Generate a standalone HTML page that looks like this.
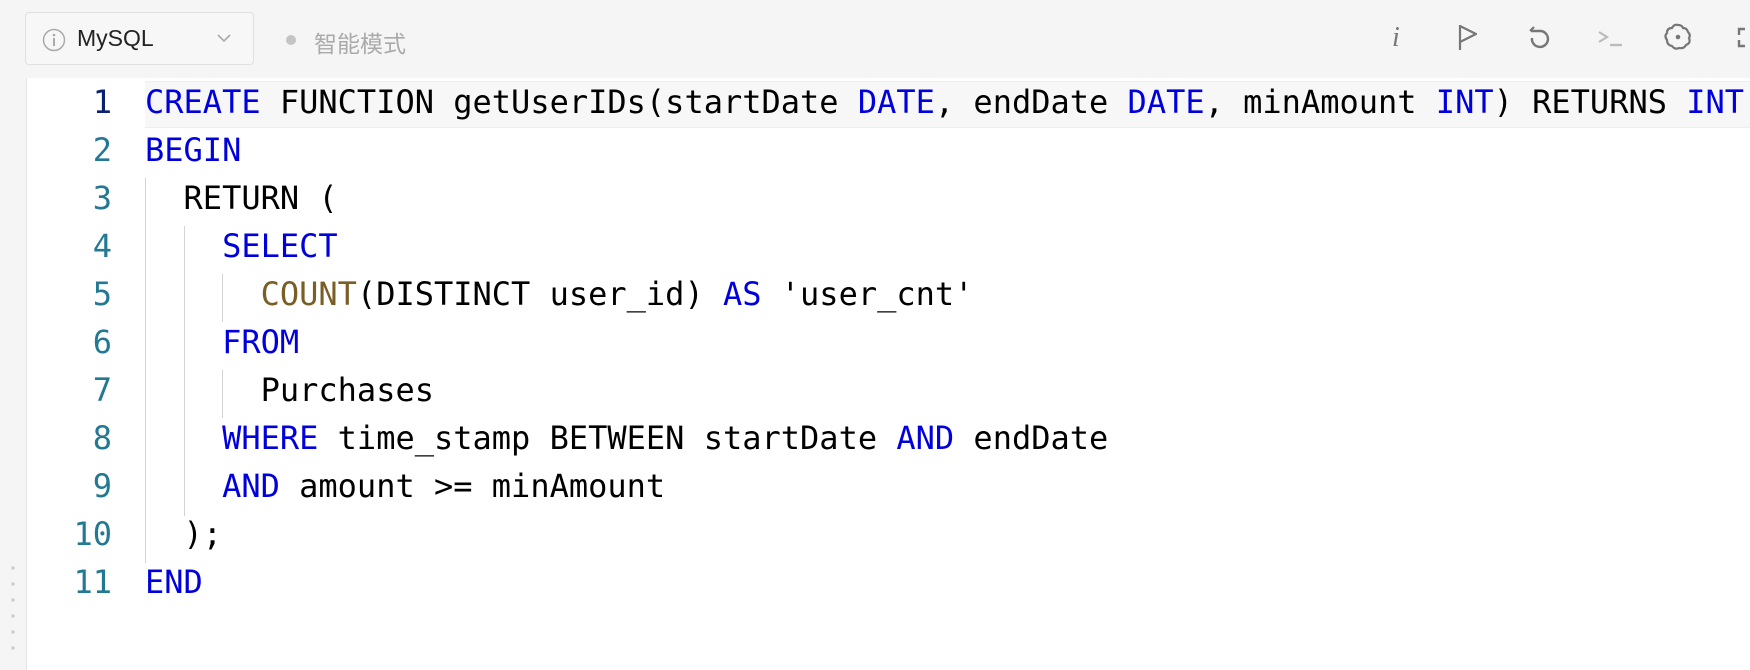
<!DOCTYPE html>
<html><head><meta charset="utf-8"><style>
body{margin:0;width:1750px;height:670px;overflow:hidden;background:#f5f5f5;font-family:"Liberation Sans","Noto Sans CJK SC",sans-serif;position:relative}
.sel{position:absolute;left:25px;top:12px;width:229px;height:53px;border:1px solid #e0e0e0;border-radius:4px;background:#f7f7f7;box-sizing:border-box}
.sel .t{position:absolute;left:51px;top:12px;font-size:23px;color:#222}
.ed{position:absolute;left:26px;top:78px;width:1724px;height:592px;background:#fff;border-left:1px solid #e4e4e4}
.strip{position:absolute;left:0;top:78px;width:25px;height:592px;background:#f5f5f5}
.code{position:absolute;left:0;top:0;font-family:"DejaVu Sans Mono",monospace;font-size:32px}
.ln{position:absolute;left:0;width:85px;text-align:right;color:#237893;height:48px;line-height:48px}
.l{position:absolute;left:118px;white-space:pre;height:48px;line-height:48px;color:#000}
.k{color:#0000dd}.f{color:#795e26}
.g{position:absolute;width:1px;background:#d3d3d3}
.ic{position:absolute;top:22px}
</style></head><body>
<div class="sel">
<svg style="position:absolute;left:16px;top:15px" width="24" height="24"><circle cx="12" cy="12" r="10.5" fill="none" stroke="#aaa" stroke-width="1.5"/><rect x="11" y="10" width="2" height="8" fill="#aaa"/><circle cx="12" cy="7" r="1.3" fill="#aaa"/></svg>
<span class="t">MySQL</span>
<svg style="position:absolute;left:190px;top:19px" width="16" height="12"><path d="M2 3 L8 9 L14 3" fill="none" stroke="#aaa" stroke-width="1.6"/></svg>
</div>
<div style="position:absolute;left:286px;top:35px;width:10px;height:10px;border-radius:50%;background:#c4c4c4"></div>
<div style="position:absolute;left:314px;top:25px;font-size:23px;color:#aaa">智能模式</div>
<div style="position:absolute;left:1392px;top:22px;font-family:'Liberation Serif',serif;font-style:italic;font-size:28px;color:#777">i</div>
<svg class="ic" style="left:1455px" width="26" height="30"><path d="M5 3 V28 M5 4 L21 12 L5 20" fill="none" stroke="#777" stroke-width="2.2" stroke-linejoin="round"/></svg>
<svg class="ic" style="left:1524px" width="30" height="30"><path d="M7 9 H17 A8 8 0 1 1 8 16" fill="none" stroke="#777" stroke-width="2.4"/><path d="M6 9 L10 5" stroke="#777" stroke-width="2.2" fill="none"/></svg>
<svg class="ic" style="left:1596px" width="30" height="30"><path d="M3 10 L11 15 L3 20" fill="none" stroke="#bbb" stroke-width="2.2"/><path d="M14 23 H26" stroke="#bbb" stroke-width="2.4"/></svg>
<svg class="ic" style="left:1663px" width="30" height="30"><path d="M15 3 Q19 3 20 6 Q24 6 25 10 Q28 13 26 16 Q28 21 23 23 Q21 27 16 26 Q12 28 9 24 Q4 23 4 18 Q1 14 4 11 Q4 6 9 6 Q11 2 15 3Z" fill="none" stroke="#777" stroke-width="2.2"/><circle cx="15" cy="15" r="2.3" fill="#777"/></svg>
<svg class="ic" style="left:1737px" width="13" height="30"><path d="M8 7 H2 V13 M2 18 V24 H8" fill="none" stroke="#777" stroke-width="2.4"/></svg>
<div class="strip"></div>
<svg style="position:absolute;left:10px;top:565px" width="6" height="100"><g fill="#c8c8c8"><circle cx="3" cy="3" r="1.6"/><circle cx="3" cy="19" r="1.6"/><circle cx="3" cy="35" r="1.6"/><circle cx="3" cy="51" r="1.6"/><circle cx="3" cy="67" r="1.6"/><circle cx="3" cy="83" r="1.6"/></g></svg>
<div class="ed"><div class="code">
<div style="position:absolute;left:118px;top:3px;width:1610px;height:45px;background:#f7f7f7;border-top:1px solid #eee;border-bottom:1px solid #eee"></div>
<div class="g" style="left:118px;top:100px;height:385px"></div>
<div class="g" style="left:157px;top:148px;height:290px"></div>
<div class="g" style="left:195px;top:196px;height:48px"></div>
<div class="g" style="left:195px;top:292px;height:48px"></div>
<div class="ln" style="top:0;color:#0b216f">1</div><div class="l" style="top:0"><span class="k">CREATE</span> FUNCTION getUserIDs(startDate <span class="k">DATE</span>, endDate <span class="k">DATE</span>, minAmount <span class="k">INT</span>) RETURNS <span class="k">INT</span></div>
<div class="ln" style="top:48px">2</div><div class="l" style="top:48px"><span class="k">BEGIN</span></div>
<div class="ln" style="top:96px">3</div><div class="l" style="top:96px">  RETURN (</div>
<div class="ln" style="top:144px">4</div><div class="l" style="top:144px">    <span class="k">SELECT</span></div>
<div class="ln" style="top:192px">5</div><div class="l" style="top:192px">      <span class="f">COUNT</span>(DISTINCT user_id) <span class="k">AS</span> 'user_cnt'</div>
<div class="ln" style="top:240px">6</div><div class="l" style="top:240px">    <span class="k">FROM</span></div>
<div class="ln" style="top:288px">7</div><div class="l" style="top:288px">      Purchases</div>
<div class="ln" style="top:336px">8</div><div class="l" style="top:336px">    <span class="k">WHERE</span> time_stamp BETWEEN startDate <span class="k">AND</span> endDate</div>
<div class="ln" style="top:384px">9</div><div class="l" style="top:384px">    <span class="k">AND</span> amount &gt;= minAmount</div>
<div class="ln" style="top:432px">10</div><div class="l" style="top:432px">  );</div>
<div class="ln" style="top:480px">11</div><div class="l" style="top:480px"><span class="k">END</span></div>
</div></div>
</body></html>
